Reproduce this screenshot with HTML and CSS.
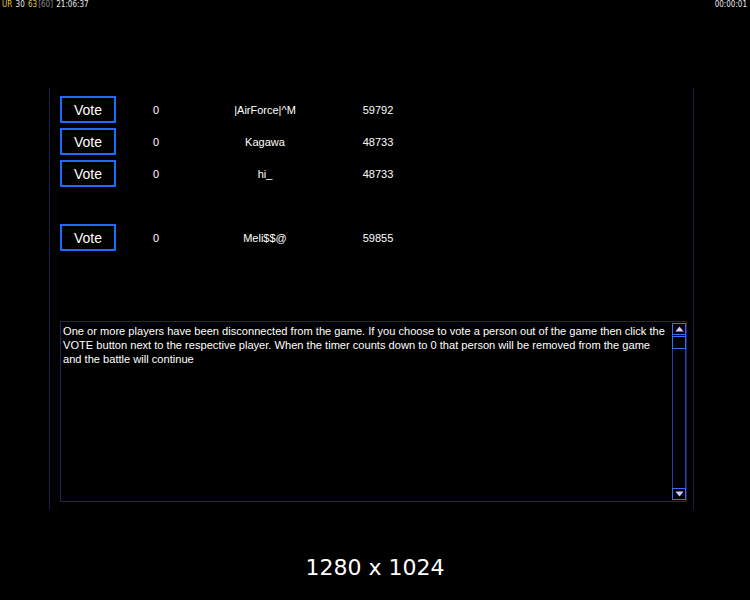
FILE: index.html
```html
<!DOCTYPE html>
<html lang="en">
<head>
    <meta charset="UTF-8">
    <title>Vote Kick</title>
    <link rel="stylesheet" href="styles.css">
</head>
<body>
    <div class="status-bar">
        <div class="stats">
            <span class="tag">UR</span>
            <span class="num">30</span>
            <span class="tag">63</span><span class="cap">[60]</span>
            <span class="num">21:06:37</span>
        </div>
        <div class="num">00:00:01</div>
    </div>

    <div class="vote-panel">
        <div class="player-list">
            <div class="player-row">
                <button class="vote-btn">Vote</button>
                <span class="col-count">0</span>
                <span class="col-name">|AirForce|^M</span>
                <span class="col-score">59792</span>
            </div>
            <div class="player-row">
                <button class="vote-btn">Vote</button>
                <span class="col-count">0</span>
                <span class="col-name">Kagawa</span>
                <span class="col-score">48733</span>
            </div>
            <div class="player-row">
                <button class="vote-btn">Vote</button>
                <span class="col-count">0</span>
                <span class="col-name">hi_</span>
                <span class="col-score">48733</span>
            </div>
            <div class="player-row empty"></div>
            <div class="player-row">
                <button class="vote-btn">Vote</button>
                <span class="col-count">0</span>
                <span class="col-name">Meli$$@</span>
                <span class="col-score">59855</span>
            </div>
        </div>

        <div class="info-box">
            <p class="info-text">One or more players have been disconnected from the game. If you choose to vote a person out of the game then click the VOTE button next to the respective player. When the timer counts down to 0 that person will be removed from the game and the battle will continue</p>
            <div class="scrollbar">
                <div class="scroll-btn">
                    <svg width="9" height="6" viewBox="0 0 9 6"><polygon points="4.5,0.5 8.5,5.5 0.5,5.5" fill="#c8d4ff"/></svg>
                </div>
                <div class="scroll-thumb"></div>
                <div class="scroll-track"></div>
                <div class="scroll-btn">
                    <svg width="9" height="6" viewBox="0 0 9 6"><polygon points="0.5,0.5 8.5,0.5 4.5,5.5" fill="#c8d4ff"/></svg>
                </div>
            </div>
        </div>
    </div>

    <div class="resolution">1280 x 1024</div>
</body>
</html>
```

FILE: styles.css
```css
body {
    margin: 0;
    background-color: #000;
    color: #fff;
    font-family: 'Liberation Sans', Arial, sans-serif;
    width: 750px;
    height: 600px;
    overflow: hidden;
}

.status-bar {
    display: flex;
    justify-content: space-between;
    padding: 0 3px 0 2px;
    height: 10px;
    font-family: 'DejaVu Sans Condensed', 'DejaVu Sans', sans-serif;
    font-size: 8px;
    line-height: 9px;
}

.stats span {
    margin-right: 1px;
}

.tag {
    color: #e8c84a;
}

.cap {
    color: #8a8a8a;
}

.num {
    color: #e8e8f0;
}

.vote-panel {
    margin: 78px 0 0 49px;
    width: 645px;
    height: 422px;
    border-left: 1px solid #1c1c4a;
    border-right: 1px solid #1c1c4a;
    padding: 8px 0 0 10px;
    box-sizing: border-box;
}

.player-list {
    display: flex;
    flex-direction: column;
    gap: 5px;
}

.player-row {
    display: grid;
    grid-template-columns: 56px 80px 138px 88px;
    align-items: center;
    height: 27px;
    font-size: 11px;
}

.player-row span {
    text-align: center;
}

.vote-btn {
    width: 56px;
    height: 27px;
    background: #000;
    border: 2px solid #1f6bff;
    color: #fff;
    font-family: 'Liberation Sans', Arial, sans-serif;
    font-size: 14px;
    padding: 0;
}

.info-box {
    display: flex;
    margin-top: 70px;
    width: 627px;
    height: 181px;
    border: 1px solid #23235a;
    box-sizing: border-box;
}

.info-text {
    flex: 1;
    margin: 2px 0 0 2px;
    padding-right: 4px;
    font-size: 11.1px;
    line-height: 14px;
}

.scrollbar {
    display: flex;
    flex-direction: column;
    width: 14px;
    margin: 1px 0;
    border-left: 1px solid #2a3fa8;
    border-right: 1px solid #2a3fa8;
    box-sizing: border-box;
}

.scroll-btn {
    height: 12px;
    border: 1px solid #3a6cff;
    box-sizing: border-box;
    display: flex;
    align-items: center;
    justify-content: center;
    margin: 0 -1px;
}

.scroll-thumb {
    height: 13px;
    margin: 1px -1px 0;
    border: 1px solid #3a6cff;
    box-sizing: border-box;
}

.scroll-track {
    flex: 1;
}

.resolution {
    margin-top: 45px;
    text-align: center;
    font-family: 'DejaVu Sans', sans-serif;
    font-size: 22px;
    color: #fff;
}
```
